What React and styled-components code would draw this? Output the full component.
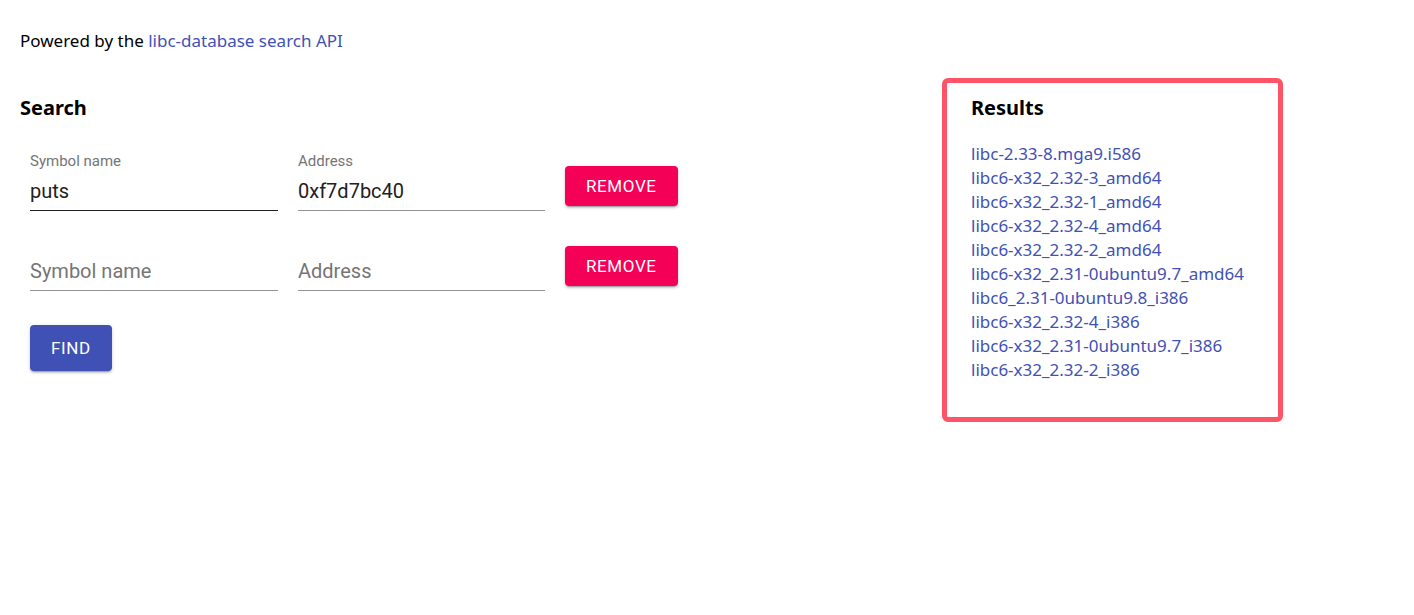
import React from 'react'
import styled, { createGlobalStyle } from 'styled-components'

const GlobalStyle = createGlobalStyle`
  body {
    margin: 0;
    background: #fff;
    font-family: "Noto Sans", "Open Sans", sans-serif;
    font-size: 17px;
    color: #000;
  }
`

const Page = styled.div`
  padding: 29px 20px 0 20px;
`

const Intro = styled.p`
  margin: 0;
  line-height: 24px;
  font-size: 17px;
`

const Link = styled.a`
  color: #3f51b5;
  text-decoration: none;
`

const Columns = styled.div`
  display: grid;
  grid-template-columns: 902px 341px;
  column-gap: 20px;
  margin-top: 25px;
`

const Heading = styled.h3`
  margin: 0;
  font-size: 20px;
  line-height: 28px;
  font-weight: 700;
`

const SearchPane = styled.section`
  padding-top: 16px;
`

const Rows = styled.div`
  display: flex;
  flex-direction: column;
  gap: 20px;
  padding: 29px 10px 0 10px;
`

const Row = styled.div`
  display: flex;
  align-items: flex-end;
  gap: 20px;
`

const Field = styled.label`
  display: flex;
  flex-direction: column;
  width: ${p => p.$width}px;
  height: 60px;
  font-family: Roboto, sans-serif;
  border-bottom: ${p => (p.$active ? '1.5px solid #212121' : '1px solid #949494')};
  box-sizing: border-box;
`

const FieldLabel = styled.span`
  height: 20px;
  line-height: 20px;
  font-size: 15px;
  color: #757575;
`

const Input = styled.input`
  border: 0;
  outline: 0;
  padding: 0;
  height: 39px;
  font-family: Roboto, sans-serif;
  font-size: 20px;
  color: #212121;
  background: transparent;
  &::placeholder {
    color: #757575;
    opacity: 1;
  }
`

const Button = styled.button`
  border: 0;
  border-radius: 4px;
  padding: 0 21px;
  height: ${p => p.$height}px;
  background: ${p => p.$color};
  color: #fff;
  font-family: Roboto, sans-serif;
  font-size: 17px;
  font-weight: 400;
  letter-spacing: 0.6px;
  text-transform: uppercase;
  box-shadow: 0 3px 1px -2px rgba(0, 0, 0, 0.2), 0 2px 2px 0 rgba(0, 0, 0, 0.14),
    0 1px 5px 0 rgba(0, 0, 0, 0.12);
  margin-bottom: ${p => p.$mb || 0}px;
  cursor: pointer;
`

const FindWrap = styled.div`
  padding: 34px 10px 0 10px;
`

const ResultsBox = styled.section`
  border: 5px solid #ff5468;
  border-radius: 6px;
  padding: 11px 24px 35px 24px;
`

const ResultList = styled.ul`
  list-style: none;
  margin: 20px 0 0 0;
  padding: 0;
`

const ResultItem = styled.li`
  line-height: 24px;
  font-size: 17px;
`

const rows = [
  { symbol: 'puts', address: '0xf7d7bc40' },
  { symbol: '', address: '' },
]

const results = [
  'libc-2.33-8.mga9.i586',
  'libc6-x32_2.32-3_amd64',
  'libc6-x32_2.32-1_amd64',
  'libc6-x32_2.32-4_amd64',
  'libc6-x32_2.32-2_amd64',
  'libc6-x32_2.31-0ubuntu9.7_amd64',
  'libc6_2.31-0ubuntu9.8_i386',
  'libc6-x32_2.32-4_i386',
  'libc6-x32_2.31-0ubuntu9.7_i386',
  'libc6-x32_2.32-2_i386',
]

export default function App() {
  return (
    <Page>
      <GlobalStyle />
      <Intro>
        Powered by the <Link href="#">libc-database search API</Link>
      </Intro>
      <Columns>
        <SearchPane>
          <Heading>Search</Heading>
          <Rows>
            {rows.map((r, i) => (
              <Row key={i}>
                <Field $width={248} $active={i === 0}>
                  <FieldLabel>{r.symbol ? 'Symbol name' : ''}</FieldLabel>
                  <Input defaultValue={r.symbol} placeholder="Symbol name" />
                </Field>
                <Field $width={247}>
                  <FieldLabel>{r.address ? 'Address' : ''}</FieldLabel>
                  <Input defaultValue={r.address} placeholder="Address" />
                </Field>
                <Button $color="#f50057" $height={40} $mb={5}>
                  Remove
                </Button>
              </Row>
            ))}
          </Rows>
          <FindWrap>
            <Button $color="#3f51b5" $height={46}>
              Find
            </Button>
          </FindWrap>
        </SearchPane>
        <ResultsBox>
          <Heading>Results</Heading>
          <ResultList>
            {results.map(name => (
              <ResultItem key={name}>
                <Link href="#">{name}</Link>
              </ResultItem>
            ))}
          </ResultList>
        </ResultsBox>
      </Columns>
    </Page>
  )
}
